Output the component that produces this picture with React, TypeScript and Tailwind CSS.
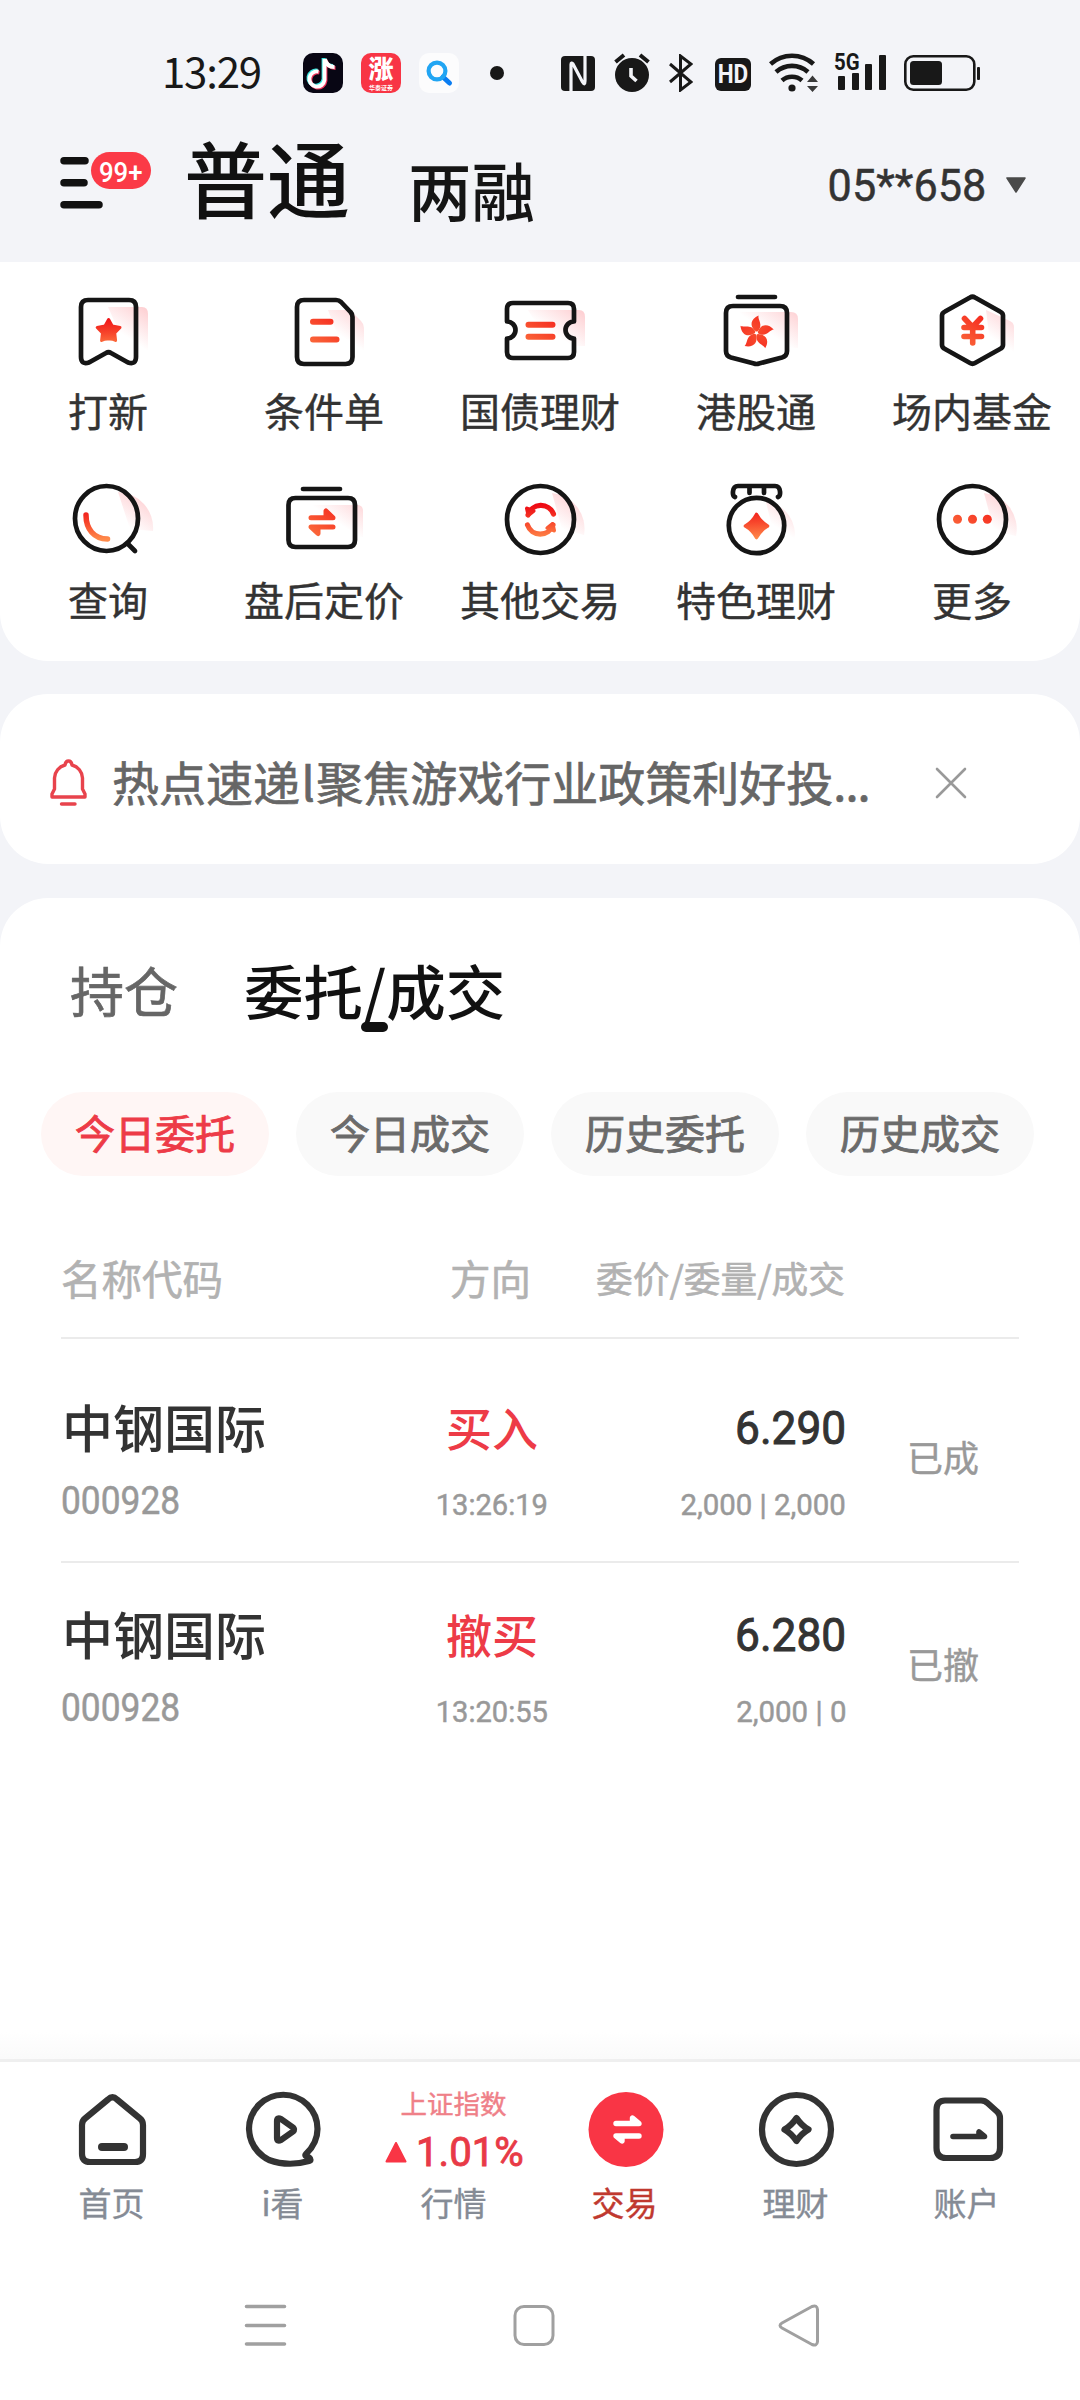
import React from "react"

const CJK = "font-['Noto_Sans_CJK_SC',sans-serif]"
const DIGITS = "font-['Roboto','Noto_Sans_CJK_SC',sans-serif]"

/**
 * Gradients shared by all the shortcut icons, they all use the same 80x80 canvas
 */
const IconGradients = () => (
  <svg className="absolute size-0" aria-hidden="true">
    <defs>
      <linearGradient id="flame" gradientUnits="userSpaceOnUse" x1="40" y1="26" x2="41" y2="60">
        <stop offset="0" stopColor="#ee0a14" />
        <stop offset="0.5" stopColor="#f7452b" />
        <stop offset="1" stopColor="#ff8a4a" />
      </linearGradient>
      <linearGradient id="warm" gradientUnits="userSpaceOnUse" x1="52" y1="26" x2="28" y2="58">
        <stop offset="0" stopColor="#f5291f" />
        <stop offset="1" stopColor="#fb6d3c" />
      </linearGradient>
      <linearGradient id="blush" gradientUnits="userSpaceOnUse" x1="80" y1="18" x2="60" y2="48">
        <stop offset="0" stopColor="#fb6f78" stopOpacity="0.34" />
        <stop offset="1" stopColor="#fb6f78" stopOpacity="0" />
      </linearGradient>
    </defs>
  </svg>
)

const ShortcutIcon = ({ children }: { children: React.ReactNode }) => (
  <svg
    className="size-20"
    viewBox="0 0 80 80"
    fill="none"
    stroke="#151515"
    strokeWidth="4.7"
    strokeLinecap="round"
    strokeLinejoin="round"
    aria-hidden="true"
  >
    {children}
  </svg>
)

const shortcuts = [
  {
    label: "打新",
    icon: (
      <ShortcutIcon>
        <path d="M40 17H74q6 0 6 7V62H60z" fill="url(#blush)" stroke="none" />
        <path d="M20 10H61q7 0 7 7V67q0 8-8 5.500L43 63q-2.500-1.500-5 0L21 72.500q-8 2.500-8-5.500V17q0-7 7-7z" />
        <path
          d="M40.600 29.500l3.600 6.500 7.800 1.500-5.300 5.500.9 7.500q-3.500-1.800-7-1.400-3.500-.4-7 1.400l.9-7.500-5.300-5.500 7.800-1.500z"
          fill="url(#flame)"
          stroke="url(#flame)"
          strokeWidth="3"
        />
      </ShortcutIcon>
    ),
  },
  {
    label: "条件单",
    icon: (
      <ShortcutIcon>
        <path d="M44 20H66L77 31q3 3 3 7V62H60z" fill="url(#blush)" stroke="none" />
        <path d="M20 10H52q3 0 5 2L66.500 22q2 2 2 5V67q0 7-7 7H20q-7 0-7-7V17q0-7 7-7z" />
        <path d="M29 31.700H46.500M29 49.500H52.500" stroke="url(#warm)" strokeWidth="6" />
      </ShortcutIcon>
    ),
  },
  {
    label: "国债理财",
    icon: (
      <ShortcutIcon>
        <path d="M28 20H79q6 0 6 7V56H50z" fill="url(#blush)" stroke="none" />
        <path d="M13 13H68q6 0 6 6V31.500a8.500 8.500 0 0 0 0 17V62q0 6-6 6H13q-6 0-6-6V48.500a8.500 8.500 0 0 0 0-17V19q0-6 6-6z" />
        <path d="M28.500 34.700H52.500M28.500 46.700H52.500" stroke="url(#warm)" strokeWidth="6" />
      </ShortcutIcon>
    ),
  },
  {
    label: "港股通",
    icon: (
      <ShortcutIcon>
        <path d="M24 22H75q7 0 7 7V58H50z" fill="url(#blush)" stroke="none" />
        <path d="M22 7H59" />
        <path d="M17 16H64q7 0 7 7V61q0 5-5 6.500L43 73.500q-2.500 1-5 0L15 67.500q-5-1.500-5-6.500V23q0-7 7-7z" />
        <g fill="url(#warm)" stroke="none">
          {[0, 72, 144, 216, 288].map((angle) => (
            <path
              key={angle}
              transform={`rotate(${angle} 40.500 43)`}
              d="M40 41.500C33 36 34.500 29 42.500 25.500C41.500 30 48 35 41.500 41.500z"
            />
          ))}
        </g>
      </ShortcutIcon>
    ),
  },
  {
    label: "场内基金",
    icon: (
      <ShortcutIcon>
        <path d="M54 20L78 31q4 2 4 6V70H60z" fill="url(#blush)" stroke="none" />
        <path d="M38 7.500q2.500-1.500 5 0L68 21.500q3 1.500 3 4V55q0 2.500-3 4L43 73q-2.500 1.500-5 0L13 59q-3-1.500-3-4V25.500q0-2.500 3-4z" />
        <path d="M32.500 28.500L40.500 37 48.500 28.500M32 37.500H49.500M32 46.500H49.500M40.700 38V53" stroke="url(#warm)" strokeWidth="5.600" />
      </ShortcutIcon>
    ),
  },
  {
    label: "查询",
    icon: (
      <ShortcutIcon>
        <path d="M50 13A36 36 0 0 1 85 52L62 50z" fill="url(#blush)" stroke="none" />
        <ellipse cx="38.500" cy="39.500" rx="31.500" ry="32.500" />
        <path d="M60 65L67 72" />
        <path d="M18 36C18 50 26 60 39.500 60" stroke="url(#flame)" strokeWidth="5.500" />
      </ShortcutIcon>
    ),
  },
  {
    label: "盘后定价",
    icon: (
      <ShortcutIcon>
        <path d="M24 26H73q6 0 6 6V58H50z" fill="url(#blush)" stroke="none" />
        <path d="M19 10H56" />
        <path d="M11.500 19H64q7 0 7 7V61q0 7-7 7H11.500q-7 0-7-7V26q0-7 7-7z" />
        <path d="M27 38.700H49L42 32V38M49 48H27L34 54.500V48" fill="url(#warm)" stroke="url(#warm)" strokeWidth="5" />
      </ShortcutIcon>
    ),
  },
  {
    label: "其他交易",
    icon: (
      <ShortcutIcon>
        <path d="M52 14A36 36 0 0 1 84 56L62 50z" fill="url(#blush)" stroke="none" />
        <circle cx="40.500" cy="40.500" r="33.500" />
        <g stroke="url(#flame)" strokeWidth="5.200">
          <path d="M28 36A13.500 13.500 0 0 1 53.500 35M53 46A13.500 13.500 0 0 1 27.500 46" />
          <path d="M27 29.500L28.500 36 33.500 32zM54 51.500L52.500 45 47.500 49z" fill="url(#flame)" strokeWidth="4" />
        </g>
      </ShortcutIcon>
    ),
  },
  {
    label: "特色理财",
    icon: (
      <ShortcutIcon>
        <path d="M50 23A32 32 0 0 1 78 62L58 56z" fill="url(#blush)" stroke="none" />
        <path d="M19 18Q16.500 17 17 12.500Q17.500 7 22 7H59Q63.500 7 64 12.500Q64.500 17 62 18M33.500 8V14M48 8V14" />
        <circle cx="40.500" cy="46.500" r="27.700" />
        <path d="M40.500 35.500Q44.500 43 51.500 47Q44.500 51 40.500 58.500Q36.500 51 29.500 47Q36.500 43 40.500 35.500z" fill="url(#flame)" stroke="url(#flame)" strokeWidth="3.600" />
      </ShortcutIcon>
    ),
  },
  {
    label: "更多",
    icon: (
      <ShortcutIcon>
        <path d="M52 14A36 36 0 0 1 84 57L62 52z" fill="url(#blush)" stroke="none" />
        <circle cx="40.500" cy="40.500" r="33.500" />
        <g fill="url(#warm)" stroke="none">
          <circle cx="25.500" cy="40.300" r="4.500" />
          <circle cx="40.500" cy="40.300" r="4.500" />
          <circle cx="55.300" cy="40.300" r="4.500" />
        </g>
      </ShortcutIcon>
    ),
  },
]

const StatusBar = () => (
  <div className="flex h-[118px] items-center pt-7 text-[#181818]">
    <div className={`${CJK} ml-[162px] w-[141px] text-[42px] leading-none tracking-[-1.2px] -translate-y-[3px]`}>13:29</div>
    <svg className="h-10 w-10" viewBox="0 0 40 40" fill="none" aria-hidden="true">
      <rect width="40" height="40" rx="10" fill="#080614" />
      <g strokeWidth="3.800">
        <path d="M20.500 5V26A7.600 7.600 0 1 1 14.500 17.600M21 6C22 10 25 13 30 13" stroke="#3ee6e0" />
        <path d="M22.500 7V28A7.600 7.600 0 1 1 16.500 19.600M23 8C24 12 27.500 15 32.500 15" stroke="#f0355b" />
        <path d="M21.500 6V27A7.600 7.600 0 1 1 15.500 18.600M22 6C23 10.500 26 14 31.500 14" stroke="#fff" />
      </g>
    </svg>
    <div className={`${DIGITS} ml-[18px] flex size-10 flex-col items-center rounded-[10px] bg-[#f83545] text-white`}>
      <span className="mt-[2px] text-[25px] font-black leading-[30px]">涨</span>
      <span className="text-[6px] font-bold leading-[6px]">华泰证券</span>
    </div>
    <svg className="ml-[18px] h-10 w-10" viewBox="0 0 40 40" fill="none" aria-hidden="true">
      <rect width="40" height="40" rx="10" fill="#fcfcfd" />
      <path d="M24 24L30.500 30" stroke="#0a7df2" strokeWidth="5" strokeLinecap="round" />
      <circle cx="18" cy="18" r="8.400" stroke="#21a5f3" strokeWidth="4.200" />
    </svg>
    <div className="ml-[31px] size-3.5 rounded-full bg-[#181818]" />

    <svg className="ml-[57px] h-[35px] w-[34px]" viewBox="0 0 34 35" aria-hidden="true">
      <rect width="34" height="35" rx="4" fill="#181818" />
      <path d="M10 35V8.500Q10 6 12 8L21.500 26Q24 30 24 25V0" fill="none" stroke="#f3f4f8" strokeWidth="3.200" />
    </svg>
    <svg className="ml-[19px] h-10 w-9" viewBox="0 0 36 40" fill="none" aria-hidden="true">
      <circle cx="18" cy="22" r="17" fill="#181818" />
      <path d="M1.500 9L10 2M34.500 9L26 2" stroke="#181818" strokeWidth="4" />
      <path d="M17 15V23L22.500 28" stroke="#f3f4f8" strokeWidth="3.600" />
    </svg>
    <svg className="ml-[19px] h-[38px] w-6" viewBox="0 0 24 38" fill="none" stroke="#181818" strokeWidth="3" aria-hidden="true">
      <path d="M1 10L22 28 11.500 36V2L22 10 1 28" />
    </svg>
    <div className={`${DIGITS} ml-[22px] mt-0.5 flex h-[33px] w-9 items-center justify-center rounded-md bg-[#181818]`}>
      <span className="scale-x-90 text-[25px] font-bold leading-none text-[#f3f4f8]">HD</span>
    </div>
    <svg className="ml-[18px] h-10 w-[50px]" viewBox="0 0 50 40" fill="none" stroke="#181818" strokeWidth="4.600" aria-hidden="true">
      <path d="M1.500 11A32 32 0 0 1 44.500 11M7 19A24 24 0 0 1 39 19M13 27.500A15 15 0 0 1 33 27.500" />
      <circle cx="23" cy="35" r="3.600" fill="#181818" stroke="none" />
      <path d="M38 29L43.500 22.500 49 29zM38 33L43.500 39 49 33z" fill="#3a3a3a" stroke="none" />
    </svg>
    <div className="relative -mt-1 ml-[15px] flex h-[37px] w-[53px] items-end gap-[6.500px] pl-1">
      <span className={`${DIGITS} absolute left-0 top-0 origin-left scale-x-[0.850] text-[24px] font-bold leading-[18px]`}>5G</span>
      <i className="h-[14px] w-[7px] rounded-[1px] bg-[#181818]" />
      <i className="h-[17px] w-[7px] rounded-[1px] bg-[#181818]" />
      <i className="h-[26px] w-[7px] rounded-[1px] bg-[#181818]" />
      <i className="h-[35px] w-[7px] rounded-[1px] bg-[#181818]" />
    </div>
    <svg className="ml-[17px] h-9 w-[77px]" viewBox="0 0 77 36" fill="none" aria-hidden="true">
      <rect x="1.300" y="1.300" width="69" height="33.400" rx="8" stroke="#181818" strokeWidth="2.600" />
      <rect x="6" y="6" width="32" height="24" rx="3.500" fill="#181818" />
      <rect x="73" y="12" width="3" height="13" rx="1" fill="#181818" />
    </svg>
  </div>
)

const Header = () => (
  <header className="flex h-36 items-start">
    <div className="relative ml-[60px] mt-[39px] h-[52px] w-[92px]">
      <svg className="h-[52px] w-11" viewBox="0 0 44 52" fill="none" stroke="#111" strokeWidth="7.500" strokeLinecap="round" aria-hidden="true">
        <path d="M4 3.800H25M4 25.800H24M4 47.800H39" />
      </svg>
      <div className={`${DIGITS} absolute -top-[5px] left-[31px] flex h-[37px] w-[60px] items-center justify-center rounded-full bg-[#fb3a47]`}>
        <span className="scale-x-[0.920] pt-1 text-[28px] font-medium leading-none text-white">99+</span>
      </div>
    </div>
    <h1 className={`${CJK} ml-8 mt-[17px] text-[83px] font-medium leading-none text-[#111]`}>普通</h1>
    <span className={`${CJK} ml-[58px] mt-[39px] text-[63.500px] font-medium leading-none text-[#151515]`}>两融</span>
    <div className="ml-auto mr-[53px] mt-[45px] flex items-center">
      <span className={`${DIGITS} origin-right scale-x-[0.960] text-[45px] leading-none text-[#333] [-webkit-text-stroke:0.500px]`}>05**658</span>
      <svg className="ml-[19px] h-[17px] w-[22px]" viewBox="0 0 22 17" aria-hidden="true">
        <path d="M2 1H20L11 15z" fill="#4a4a4a" stroke="#4a4a4a" strokeWidth="1.500" strokeLinejoin="round" />
      </svg>
    </div>
  </header>
)

const ShortcutGrid = () => (
  <section className="grid h-[399px] auto-rows-[189px] grid-cols-5 rounded-b-[48px] bg-white pt-7">
    {shortcuts.map(({ label, icon }) => (
      <div key={label} className="flex flex-col items-center [&>svg]:overflow-visible">
        {icon}
        <span className={`${CJK} mt-5 whitespace-nowrap text-[40px] leading-none text-[#333] [-webkit-text-stroke:0.400px]`}>{label}</span>
      </div>
    ))}
  </section>
)

const NewsBar = () => (
  <section className="mt-[33px] flex h-[170px] items-center rounded-[48px] bg-white">
    <svg className="ml-[49px] mt-1.5 h-[50px] w-10" viewBox="0 0 40 50" fill="none" stroke="#e8434c" strokeWidth="3.400" strokeLinecap="round" strokeLinejoin="round" aria-hidden="true">
      <path d="M3 40V37L5.500 32V21A14 14 0 0 1 16 8Q16.500 4 19.500 4Q22.500 4 23 8A14 14 0 0 1 33.500 21V32L36 37V40z" />
      <path d="M12.500 47H26" />
    </svg>
    <span className={`${CJK} ml-[23px] mt-0.5 whitespace-nowrap text-[47px] leading-none text-[#666] [-webkit-text-stroke:0.700px]`}>
      热点速递<span className="px-[1.500px]">l</span>聚焦游戏行业政策利好投<span className="tracking-[-1px]">...</span>
    </span>
    <svg className="ml-auto mr-[113px] mt-2 h-8 w-8" viewBox="0 0 32 32" fill="none" stroke="#999" strokeWidth="2.600" strokeLinecap="round" aria-hidden="true">
      <path d="M2 2L30 30M30 2L2 30" />
    </svg>
  </section>
)

const filters = ["今日委托", "今日成交", "历史委托", "历史成交"]

const orders = [
  { name: "中钢国际", code: "000928", side: "买入", time: "13:26:19", price: "6.290", volume: "2,000 | 2,000", status: "已成" },
  { name: "中钢国际", code: "000928", side: "撤买", time: "13:20:55", price: "6.280", volume: "2,000 | 0", status: "已撤" },
]

const OrderRow = ({ order, className }: { order: (typeof orders)[number]; className: string }) => (
  <div className={`grid grid-cols-[330px_204px_250px_1fr] ${className}`}>
    <div className="pl-px">
      <div className={`${CJK} text-[51px] font-medium leading-none text-[#333]`}>{order.name}</div>
      <div className={`${DIGITS} -ml-px mt-[30px] origin-left scale-x-[0.930] text-[38px] leading-none text-[#999] [-webkit-text-stroke:0.500px]`}>{order.code}</div>
    </div>
    <div className="flex flex-col items-center pr-0.5">
      <div className={`${CJK} mt-0.5 text-[46px] font-medium leading-none text-[#ed3b47]`}>{order.side}</div>
      <div className={`${DIGITS} mt-[41px] scale-x-[0.970] text-[30px] leading-none text-[#999] [-webkit-text-stroke:0.500px]`}>{order.time}</div>
    </div>
    <div className="-mr-px flex flex-col items-end whitespace-nowrap">
      <div className={`${DIGITS} mt-[3px] origin-right scale-x-[0.940] text-[47px] leading-none text-[#333] [-webkit-text-stroke:1px]`}>{order.price}</div>
      <div className={`${DIGITS} mt-[39px] origin-right scale-x-[0.980] text-[30px] leading-none text-[#999] [-webkit-text-stroke:0.500px]`}>{order.volume}</div>
    </div>
    <div className={`${CJK} ml-[62px] mt-[37px] text-[36px] leading-none text-[#999] [-webkit-text-stroke:0.400px]`}>{order.status}</div>
  </div>
)

const OrdersPanel = () => (
  <section className="mt-[34px] flex h-[1164px] flex-col rounded-t-[48px] bg-white">
    <div className="flex items-center pl-[70px] pt-[62px]">
      <span className={`${CJK} text-[54px] leading-none text-[#666] [-webkit-text-stroke:0.700px]`}>持仓</span>
      <div className="relative ml-[66px]">
        <span className={`${CJK} block text-[59.500px] font-medium leading-none text-[#111]`}>委托/成交</span>
        <i className="absolute -bottom-[12px] left-[117px] h-2.5 w-[27px] rounded-full bg-[#111]" />
      </div>
    </div>

    <div className="mt-[72px] flex gap-[27px] pl-[41px]">
      {filters.map((filter, index) => (
        <div
          key={filter}
          className={`${CJK} flex h-[84px] w-[228px] items-center justify-center rounded-full pb-[3px] text-[40px] leading-none [-webkit-text-stroke:0.900px] ${
            index === 0 ? "bg-[#fff6f5] text-[#ed3b47]" : "bg-[#f9f9f9] text-[#6b6b6b]"
          }`}
        >
          {filter}
        </div>
      ))}
    </div>

    <div className="mx-[61px]">
      <div className={`${CJK} grid h-[163px] grid-cols-[330px_204px_250px_1fr] items-start border-b-2 border-[#ebebeb] pt-[82px] text-[40.500px] leading-none text-[#b2b2b2] [-webkit-text-stroke:0.600px]`}>
        <span>名称代码</span>
        <span className="pl-[59px]">方向</span>
        <span className="mt-px whitespace-nowrap text-right text-[36.700px] leading-none">委价/委量/成交</span>
      </div>
      <OrderRow order={orders[0]} className="h-[224px] border-b-2 border-[#ebebeb] pt-[62px]" />
      <OrderRow order={orders[1]} className="pt-[45px]" />
    </div>
    <div className="mt-auto h-[30px] border-b-[3px] border-[#efefef] bg-linear-to-b from-white to-[#fafafa]" />
  </section>
)

const TabIcon = ({ children }: { children: React.ReactNode }) => (
  <svg className="size-20" viewBox="0 0 80 80" fill="none" stroke="#333" strokeWidth="6.200" strokeLinecap="round" strokeLinejoin="round" aria-hidden="true">
    {children}
  </svg>
)

const Tab = ({ label, active, children }: { label: string; active?: boolean; children: React.ReactNode }) => (
  <div className="flex flex-col items-center">
    <div className="flex h-20 flex-col items-center">{children}</div>
    <span className={`${CJK} mt-4 text-[33px] leading-none [-webkit-text-stroke:0.400px] ${active ? "text-[#c0392f]" : "text-[#858b95]"}`}>{label}</span>
  </div>
)

const TabBar = () => (
  <nav className="grid h-[204px] grid-cols-6 bg-white pl-[26px] pr-7 pt-7">
    <Tab label="首页">
      <TabIcon>
        <path d="M36 9.500Q40.500 5 45 9.500L68 28.500Q71 31 71 35V64Q71 72 63 72H18Q10 72 10 64V35Q10 31 13 28.500z" />
        <path d="M30 57H52" strokeWidth="8" />
      </TabIcon>
    </Tab>
    <Tab label="i看">
      <TabIcon>
        <path d="M63 64Q74.500 53 74.500 39A34.200 34.200 0 1 0 6 39Q7 60 26 70Q45 77 66 71Q69 70 66 67.500Q61 66 63 64z" />
        <path d="M34 31Q34 27 38 29L50 37.500Q52 39.500 50 41.500L38 50Q34 52 34 48z" />
      </TabIcon>
    </Tab>
    <Tab label="行情">
      <span className={`${CJK} text-[26.500px] leading-none text-[#ef8088] [-webkit-text-stroke:0.400px]`}>上证指数</span>
      <div className="mt-[23px] flex h-[26px] items-center">
        <svg className="h-[22px] w-[22px]" viewBox="0 0 22 22" aria-hidden="true">
          <path d="M11 1L20.500 19.500H1.500z" fill="#f93545" stroke="#f93545" strokeWidth="2" strokeLinejoin="round" />
        </svg>
        <span className={`${DIGITS} -mr-1 ml-[9px] origin-left scale-x-[0.980] text-[41px] leading-none text-[#e83a46] [-webkit-text-stroke:0.900px]`}>1.01%</span>
      </div>
    </Tab>
    <Tab label="交易" active>
      <TabIcon>
        <circle cx="41" cy="39.500" r="37.500" fill="#f93545" stroke="none" />
        <path d="M31 33.500H54L47.500 28V33M54 46H31L37 51V46" fill="#fff" stroke="#fff" strokeWidth="5.400" />
      </TabIcon>
    </Tab>
    <Tab label="理财">
      <TabIcon>
        <circle cx="40.500" cy="39.500" r="34.500" />
        <path d="M40.500 28Q45.500 35.500 52.500 39.500Q45.500 43.500 40.500 51Q35.500 43.500 28.500 39.500Q35.500 35.500 40.500 28z" />
      </TabIcon>
    </Tab>
    <Tab label="账户">
      <TabIcon>
        <path d="M18 10.500H54Q58 10.500 60.500 13L70.500 22Q73 24.500 73 28V58Q73 68 63 68H19Q9.500 68 9.500 58V20Q9.500 10.500 18 10.500z" />
        <path d="M26 46.500H57.500L52 42V46" strokeWidth="5.600" />
      </TabIcon>
    </Tab>
  </nav>
)

const SystemNav = () => (
  <div className="flex h-[134px] items-start bg-white pt-[37px]">
    <svg className="ml-[244px] h-[45px] w-[43px]" viewBox="0 0 43 45" stroke="#a0a0a0" strokeWidth="3.600" strokeLinecap="round" aria-hidden="true">
      <path d="M2.500 3.500H40.500M2.500 22.500H40.500M2.500 41H40.500" />
    </svg>
    <svg className="ml-[225px] h-[45px] w-[45px]" viewBox="0 0 45 45" fill="none" stroke="#a0a0a0" strokeWidth="3" aria-hidden="true">
      <rect x="3" y="3.500" width="38" height="38" rx="9" />
    </svg>
    <svg className="ml-[220px] h-[45px] w-[45px]" viewBox="0 0 45 45" fill="none" stroke="#a0a0a0" strokeWidth="3" strokeLinejoin="round" aria-hidden="true">
      <path d="M35 3.500Q40 1.500 40.500 6.500V38.500Q40 43.500 35 41.500L5 25Q1 22.500 5 20z" />
    </svg>
  </div>
)

export default function App() {
  return (
    <div className="min-h-[2400px] w-[1080px] overflow-hidden bg-[#f3f4f8]">
      <IconGradients />
      <StatusBar />
      <Header />
      <ShortcutGrid />
      <NewsBar />
      <OrdersPanel />
      <TabBar />
      <SystemNav />
    </div>
  )
}
